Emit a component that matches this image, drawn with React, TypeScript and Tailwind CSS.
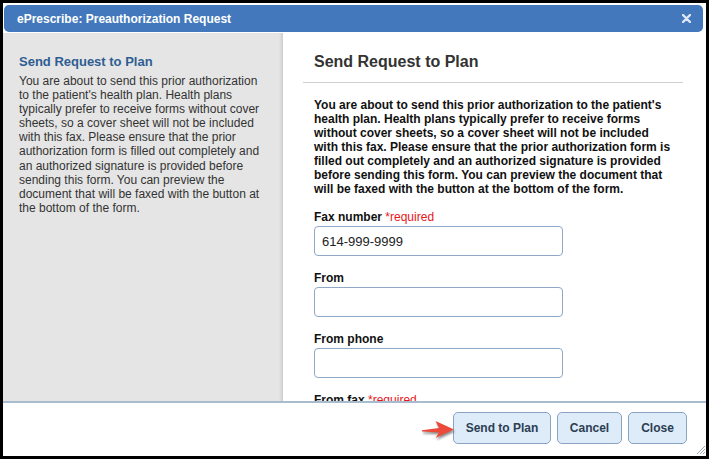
import React from 'react';

const leftLines = [
  'You are about to send this prior authorization',
  "to the patient's health plan. Health plans",
  'typically prefer to receive forms without cover',
  'sheets, so a cover sheet will not be included',
  'with this fax. Please ensure that the prior',
  'authorization form is filled out completely and',
  'an authorized signature is provided before',
  'sending this form. You can preview the',
  'document that will be faxed with the button at',
  'the bottom of the form.',
];

const rightLines = [
  "You are about to send this prior authorization to the patient's",
  'health plan. Health plans typically prefer to receive forms',
  'without cover sheets, so a cover sheet will not be included',
  'with this fax. Please ensure that the prior authorization form is',
  'filled out completely and an authorized signature is provided',
  'before sending this form. You can preview the document that',
  'will be faxed with the button at the bottom of the form.',
];

const fields = [
  { label: 'Fax number', required: true, value: '614-999-9999' },
  { label: 'From', required: false, value: '' },
  { label: 'From phone', required: false, value: '' },
  { label: 'From fax', required: true, value: '' },
];

function Field({ label, required, value }: { label: string; required: boolean; value: string }) {
  return (
    <div>
      <label className="block text-[12px] leading-[14px] font-bold text-[#111] mb-[2px]">
        {label} {required && <span className="font-normal text-[#e8151b]">*required</span>}
      </label>
      <input
        type="text"
        defaultValue={value}
        className="w-[249px] h-[30px] border border-[#8fa8c8] rounded-[4px] px-[7px] text-[13px] text-[#222] bg-white focus:outline-none"
      />
    </div>
  );
}

export default function App() {
  return (
    <div
      className="w-[709px] h-[459px] border-[3px] border-black bg-white flex flex-col overflow-hidden"
      style={{ fontFamily: '"Liberation Sans", Arial, sans-serif' }}
    >
      {/* title bar */}
      <div className="mt-[2px] ml-[1px] mr-[3px] h-[27px] shrink-0 rounded-[5px] bg-[#4379bc] flex items-center justify-between pl-[13px] pr-[12px]">
        <span className="text-[12px] font-bold text-white">ePrescribe: Preauthorization Request</span>
        <svg width="9" height="9" viewBox="0 0 9 9">
          <path d="M1 1 L8 8 M8 1 L1 8" stroke="#dfe8f4" strokeWidth="2.4" strokeLinecap="round" />
        </svg>
      </div>

      {/* body */}
      <div className="mt-[1px] h-[368px] shrink-0 flex overflow-hidden">
        <div className="w-[280px] shrink-0 bg-[#e5e5e5] px-[16px] pt-[21px] shadow-[inset_-4px_0_3px_-2px_rgba(0,0,0,0.10)]">
          <h2 className="text-[13px] leading-[16px] font-bold text-[#2f5d93] mb-[4px]">Send Request to Plan</h2>
          <p className="text-[12px] leading-[14.1px] text-[#333]">
            {leftLines.map((l) => (
              <span key={l} className="block whitespace-nowrap">{l}</span>
            ))}
          </p>
        </div>

        <div className="flex-1 pl-[20px] pr-[23px] pt-[19px] overflow-hidden">
          <h2 className="pl-[11px] text-[16px] leading-[20px] font-bold text-[#333] pb-[10px] border-b border-[#cfcfcf]">
            Send Request to Plan
          </h2>
          <div className="pl-[11px] pt-[15px]">
            <p className="text-[12px] leading-[14px] font-bold text-[#111] mb-[14px]">
              {rightLines.map((l) => (
                <span key={l} className="block whitespace-nowrap">{l}</span>
              ))}
            </p>
            <div className="flex flex-col gap-[15px]">
              {fields.map((f) => (
                <Field key={f.label} {...f} />
              ))}
            </div>
          </div>
        </div>
      </div>

      {/* footer */}
      <div className="relative flex-1 border-t-2 border-[#a8bbcf] flex justify-end items-start gap-[6px] pt-[9px] pr-[19px]">
        <svg
          className="absolute left-[418px] top-[15px] drop-shadow-[1px_2px_1px_rgba(0,0,0,0.45)]"
          width="36"
          height="24"
          viewBox="0 0 36 24"
        >
          <path d="M1 12.2 L18 10 L14.5 3 L33 11.5 L14.5 20 L18 14.5 L1 13.6 Z" fill="#ec4a3b" />
        </svg>
        {['Send to Plan', 'Cancel', 'Close'].map((b) => (
          <button
            key={b}
            className={`h-[32px] ${b === 'Send to Plan' ? 'w-[98px]' : b === 'Cancel' ? 'w-[65px]' : 'w-[59px]'} rounded-[5px] border border-[#8aa3c2] bg-[#deebf9] text-[12px] font-bold text-[#2b3e53]`}
          >
            {b}
          </button>
        ))}
        <svg className="absolute right-[0px] bottom-[1px]" width="11" height="11" viewBox="0 0 11 11">
          <path d="M10 2 L2 10 M10 5 L5 10 M10 8 L8 10" stroke="#9aa8b6" strokeWidth="1" />
        </svg>
      </div>
    </div>
  );
}
